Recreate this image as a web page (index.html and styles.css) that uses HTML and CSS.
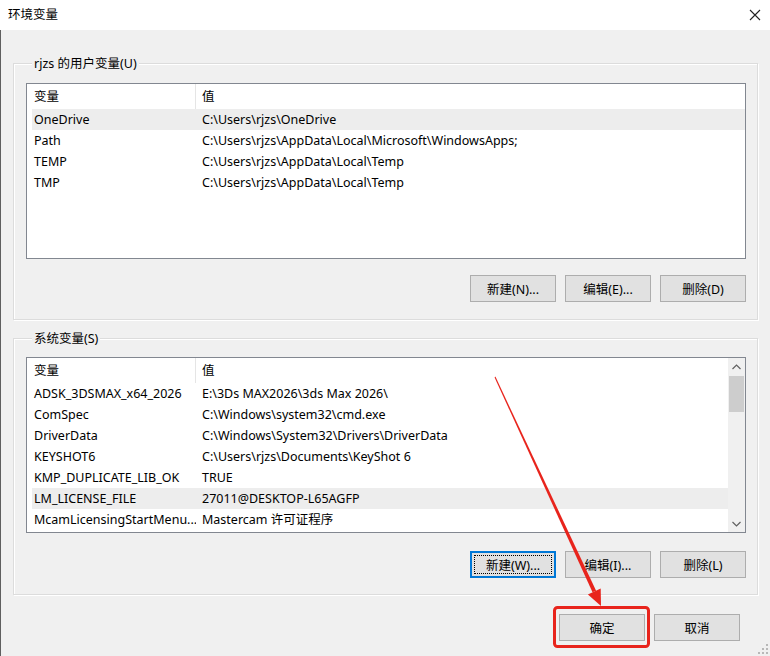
FILE: index.html
```html
<!DOCTYPE html>
<html lang="zh-CN">
<head>
<meta charset="utf-8">
<title>环境变量</title>
<link rel="stylesheet" href="styles.css">
</head>
<body>
<div class="window">
  <div class="titlebar">
    <span class="title">环境变量</span>
    <svg class="close" width="12" height="12" viewBox="0 0 12 12"><path d="M1 1 L11 11 M11 1 L1 11" stroke="#222" stroke-width="1.1" fill="none"/></svg>
  </div>
  <div class="content">
    <div class="group group-user">
      <div class="group-label">rjzs 的用户变量(U)</div>
      <div class="list list-user">
        <div class="table">
          <div class="row head"><span class="c1">变量</span><span class="c2">值</span></div>
          <div class="row sel"><span class="c1">OneDrive</span><span class="c2">C:\Users\rjzs\OneDrive</span></div>
          <div class="row"><span class="c1">Path</span><span class="c2">C:\Users\rjzs\AppData\Local\Microsoft\WindowsApps;</span></div>
          <div class="row"><span class="c1">TEMP</span><span class="c2">C:\Users\rjzs\AppData\Local\Temp</span></div>
          <div class="row"><span class="c1">TMP</span><span class="c2">C:\Users\rjzs\AppData\Local\Temp</span></div>
        </div>
      </div>
      <div class="btnrow">
        <button class="btn">新建(N)...</button>
        <button class="btn">编辑(E)...</button>
        <button class="btn">删除(D)</button>
      </div>
    </div>
    <div class="group group-sys">
      <div class="group-label">系统变量(S)</div>
      <div class="list list-sys">
        <div class="table">
          <div class="row head"><span class="c1">变量</span><span class="c2">值</span></div>
          <div class="row"><span class="c1">ADSK_3DSMAX_x64_2026</span><span class="c2">E:\3Ds MAX2026\3ds Max 2026\</span></div>
          <div class="row"><span class="c1">ComSpec</span><span class="c2">C:\Windows\system32\cmd.exe</span></div>
          <div class="row"><span class="c1">DriverData</span><span class="c2">C:\Windows\System32\Drivers\DriverData</span></div>
          <div class="row"><span class="c1">KEYSHOT6</span><span class="c2">C:\Users\rjzs\Documents\KeyShot 6</span></div>
          <div class="row"><span class="c1">KMP_DUPLICATE_LIB_OK</span><span class="c2">TRUE</span></div>
          <div class="row sel"><span class="c1">LM_LICENSE_FILE</span><span class="c2">27011@DESKTOP-L65AGFP</span></div>
          <div class="row"><span class="c1">McamLicensingStartMenu...</span><span class="c2">Mastercam 许可证程序</span></div>
        </div>
        <div class="scrollbar">
          <div class="sb-btn"><svg width="9" height="6" viewBox="0 0 9 6"><path d="M0.5 5 L4.5 1 L8.5 5" stroke="#606060" stroke-width="1.2" fill="none"/></svg></div>
          <div class="sb-track"><div class="sb-thumb"></div></div>
          <div class="sb-btn"><svg width="9" height="6" viewBox="0 0 9 6"><path d="M0.5 1 L4.5 5 L8.5 1" stroke="#606060" stroke-width="1.2" fill="none"/></svg></div>
        </div>
      </div>
      <div class="btnrow">
        <button class="btn focused"><span class="focus-inner">新建(W)...</span></button>
        <button class="btn">编辑(I)...</button>
        <button class="btn">删除(L)</button>
      </div>
    </div>
    <div class="btnrow bottom">
      <button class="btn">确定</button>
      <button class="btn">取消</button>
    </div>
    <svg class="grip" width="10" height="10" viewBox="0 0 10 10">
      <rect x="8" y="0" width="2" height="2" fill="#b8b8b8"/>
      <rect x="4" y="4" width="2" height="2" fill="#b8b8b8"/><rect x="8" y="4" width="2" height="2" fill="#b8b8b8"/>
      <rect x="0" y="8" width="2" height="2" fill="#b8b8b8"/><rect x="4" y="8" width="2" height="2" fill="#b8b8b8"/><rect x="8" y="8" width="2" height="2" fill="#b8b8b8"/>
    </svg>
  </div>
  <svg class="annot" width="770" height="656" viewBox="0 0 770 656">
    <polygon points="495.4,376.6 494.6,377.4 592.5,592.3 596.1,590.7" fill="#e8241c"/>
    <polygon points="601,606 600.7,588.6 587.9,594.4" fill="#e8241c"/>
    <rect x="554.5" y="607.5" width="94" height="39" rx="3" ry="3" fill="none" stroke="#e8241c" stroke-width="3"/>
  </svg>
</div>
</body>
</html>
```
FILE: styles.css
```css
html, body {
  margin: 0;
  padding: 0;
  background: #ffffff;
}
body {
  font-family: "Noto Sans", "Noto Sans CJK SC", sans-serif;
  font-size: 12px;
  color: #000;
}
.window {
  position: relative;
  width: 770px;
  height: 656px;
  overflow: hidden;
  display: flex;
  flex-direction: column;
}
.titlebar {
  height: 30px;
  flex: none;
  background: #ffffff;
  display: flex;
  align-items: center;
  justify-content: space-between;
  padding: 0 9px 0 8px;
  box-sizing: border-box;
}
.title {
  font-size: 12.5px;
  line-height: 16px;
}
.close {
  display: block;
}
.content {
  position: relative;
  flex: 1;
  background: #f0f0f0;
  border-left: 1px solid #5f5f5f;
  padding: 33px 12px 0 12px;
  display: flex;
  flex-direction: column;
}
.group {
  border: 1px solid #dcdcdc;
  box-shadow: 1px 1px 0 #ffffff, inset 1px 1px 0 #ffffff;
  padding: 0 11px 17px 12px;
}
.group-sys {
  margin-top: 18px;
  padding-bottom: 16px;
}
.group-label {
  width: fit-content;
  margin: -9px 0 0 6px;
  padding: 0 2px;
  line-height: 17px;
  font-size: 12.5px;
  background: #f0f0f0;
}
.list {
  box-sizing: border-box;
  height: 176px;
  border: 1px solid #828790;
  background: #ffffff;
  display: flex;
  font-size: 12.5px;
}
.list-user {
  margin-top: 11px;
}
.list-sys {
  margin-top: 10px;
}
.table {
  flex: 1;
  padding-left: 5px;
  min-width: 0;
}
.row {
  display: flex;
  height: 21px;
  line-height: 21px;
  white-space: nowrap;
}
.row.head {
  height: 25px;
  line-height: 25px;
}
.row.sel {
  background: #ededed;
}
.c1 {
  width: 164px;
  padding-left: 2px;
  box-sizing: border-box;
  flex: none;
  overflow: hidden;
}
.head .c1 {
  border-right: 1px solid #e5e5e5;
}
.c2 {
  padding-left: 6px;
  flex: 1;
  overflow: hidden;
}
.scrollbar {
  width: 17px;
  flex: none;
  background: #f0f0f0;
  display: flex;
  flex-direction: column;
}
.sb-btn {
  height: 17px;
  display: flex;
  align-items: center;
  justify-content: center;
  flex: none;
}
.sb-track {
  flex: 1;
  padding: 1px 1px 0 1px;
}
.sb-thumb {
  height: 36px;
  background: #cdcdcd;
}
.btnrow {
  display: flex;
  justify-content: flex-end;
  gap: 9px;
  margin-top: 16px;
}
.group-sys .btnrow {
  margin-top: 18px;
}
.btn {
  width: 86px;
  height: 27px;
  box-sizing: border-box;
  background: #e1e1e1;
  border: 1px solid #adadad;
  border-radius: 0;
  font-family: "Noto Sans", "Noto Sans CJK SC", sans-serif;
  font-size: 12.5px;
  color: #000;
  padding: 0;
  margin: 0;
}
.btn.focused {
  border: 2px solid #0078d7;
  padding: 2px;
}
.focus-inner {
  display: flex;
  align-items: center;
  justify-content: center;
  height: 100%;
  box-sizing: border-box;
  border: 1px dotted #000;
}
.btnrow.bottom {
  margin-top: 19px;
  margin-right: 18px;
}
.grip {
  position: absolute;
  right: 2px;
  bottom: 2px;
}
.annot {
  position: absolute;
  left: 0;
  top: 0;
  pointer-events: none;
}
```
